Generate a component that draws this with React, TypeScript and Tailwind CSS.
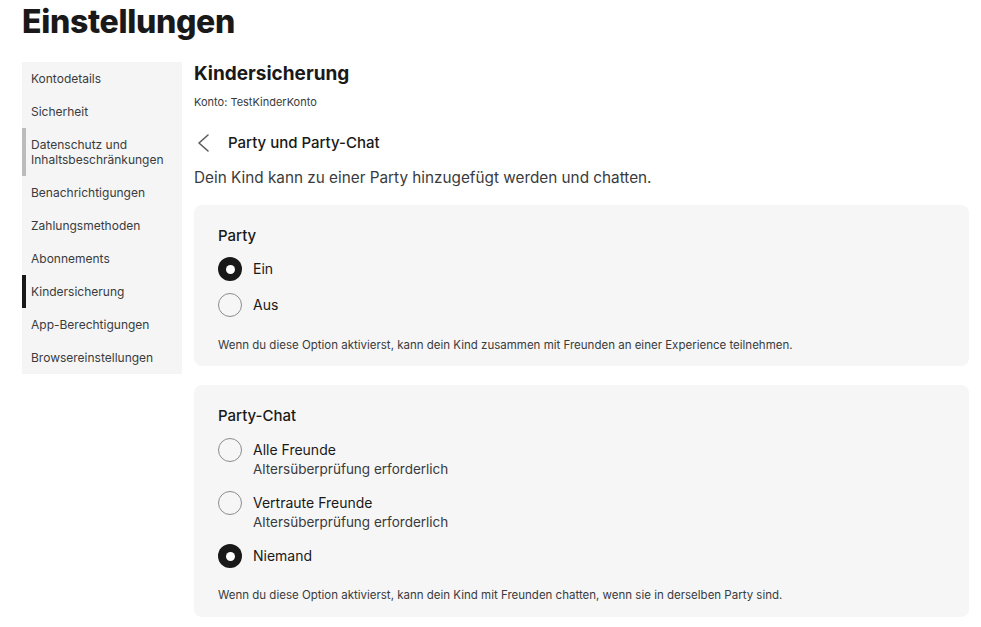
import React from "react";

const navItems = [
  { label: "Kontodetails" },
  { label: "Sicherheit" },
  { label: "Datenschutz und Inhaltsbeschränkungen", marker: "muted" },
  { label: "Benachrichtigungen" },
  { label: "Zahlungsmethoden" },
  { label: "Abonnements" },
  { label: "Kindersicherung", marker: "active" },
  { label: "App-Berechtigungen" },
  { label: "Browsereinstellungen" },
];

const Radio = ({ checked }: { checked?: boolean }) =>
  checked ? (
    <span className="flex h-6 w-6 shrink-0 items-center justify-center rounded-full bg-[#191919]">
      <span className="h-[9px] w-[9px] rounded-full bg-white" />
    </span>
  ) : (
    <span className="h-6 w-6 shrink-0 rounded-full border border-[#8c8c8c]" />
  );

const Option = ({
  label,
  hint,
  checked,
}: {
  label: string;
  hint?: string;
  checked?: boolean;
}) => (
  <div className="flex items-start gap-[11px]">
    <Radio checked={checked} />
    <div className="flex flex-col">
      <span className="text-[14px] leading-6 text-[#191919]">{label}</span>
      {hint && (
        <span className="-mt-[1px] text-[13.5px] leading-4 text-[#393b3d]">
          {hint}
        </span>
      )}
    </div>
  </div>
);

export default function App() {
  return (
    <div className="min-h-screen bg-white pl-[22px] pr-[12px] font-['Inter',sans-serif] text-[#191919]">
      <h1 className="pt-[2px] text-[32px] font-extrabold leading-[40px] tracking-[-0.01em]">
        Einstellungen
      </h1>

      <div className="mt-[20px] flex items-start gap-3">
        {/* left nav */}
        <nav className="w-[160px] shrink-0 bg-[#f5f5f5]">
          {navItems.map((item) => (
            <div
              key={item.label}
              className={
                "border-l-4 py-[9px] pl-[5px] pr-2 text-[12px] leading-[15px] text-[#393b3d] " +
                (item.marker === "active"
                  ? "border-[#191919]"
                  : item.marker === "muted"
                    ? "border-[#bcbcbc]"
                    : "border-transparent")
              }
            >
              {item.label}
            </div>
          ))}
        </nav>

        <main className="flex-1">
          <h2 className="text-[19px] font-bold leading-6">Kindersicherung</h2>
          <p className="mt-2 text-[11px] leading-4 text-[#393b3d]">
            Konto: TestKinderKonto
          </p>

          <div className="mt-[21px] flex h-6 items-center gap-[10px]">
            <svg width="24" height="24" viewBox="0 0 24 24" fill="none">
              <path
                d="M14 4 L5 12 L14 20"
                stroke="#5c5c5c"
                strokeWidth="1.6"
                strokeLinecap="round"
                strokeLinejoin="round"
              />
            </svg>
            <span className="text-[15px] font-medium">Party und Party-Chat</span>
          </div>

          <p className="mt-3 text-[15.3px] leading-[22px] text-[#393b3d]">
            Dein Kind kann zu einer Party hinzugefügt werden und chatten.
          </p>

          <section className="mt-4 rounded-lg bg-[#f6f6f7] px-6 pb-[13px] pt-5">
            <h3 className="text-[15px] font-medium leading-[22px]">Party</h3>
            <div className="mt-[10px] flex flex-col gap-3">
              <Option label="Ein" checked />
              <Option label="Aus" />
            </div>
            <p className="mt-5 text-[11.5px] leading-4 text-[#393b3d]">
              Wenn du diese Option aktivierst, kann dein Kind zusammen mit Freunden
              an einer Experience teilnehmen.
            </p>
          </section>

          <section className="mt-[19px] rounded-lg bg-[#f6f6f7] px-6 pb-[14px] pt-5">
            <h3 className="text-[15px] font-medium leading-[22px]">Party-Chat</h3>
            <div className="mt-[11px] flex flex-col gap-[14px]">
              <Option label="Alle Freunde" hint="Altersüberprüfung erforderlich" />
              <Option
                label="Vertraute Freunde"
                hint="Altersüberprüfung erforderlich"
              />
              <Option label="Niemand" checked />
            </div>
            <p className="mt-[19px] text-[11.5px] leading-4 text-[#393b3d]">
              Wenn du diese Option aktivierst, kann dein Kind mit Freunden chatten,
              wenn sie in derselben Party sind.
            </p>
          </section>
        </main>
      </div>
    </div>
  );
}
